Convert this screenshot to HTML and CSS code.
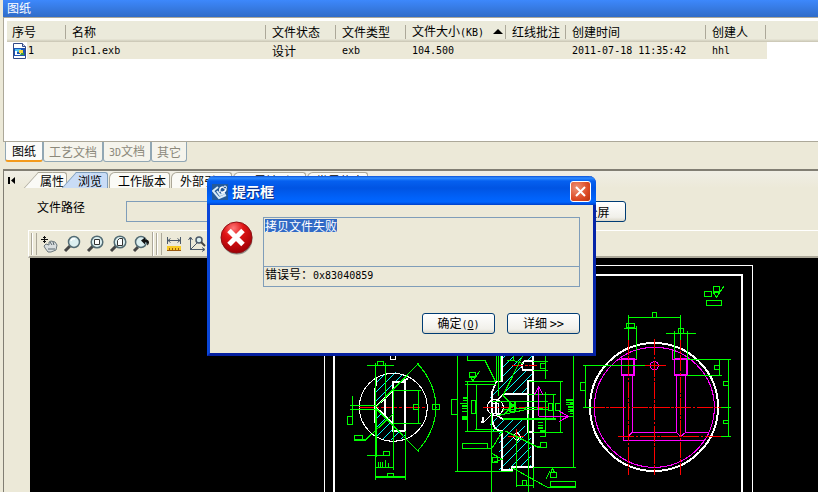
FILE: index.html
```html
<!DOCTYPE html>
<html lang="zh-CN">
<head>
<meta charset="utf-8">
<title>图纸</title>
<link rel="stylesheet" href="styles.css">
</head>
<body>
<main class="app">
  <section class="documents">
    <h1 class="pane-title">图纸</h1>
    <div class="list">
      <table class="files">
        <colgroup><col class="c60"><col class="c200"><col class="c70"><col class="c70"><col class="c100"><col class="c60"><col class="c140"><col class="c60"><col></colgroup>
        <thead>
          <tr><th>序号</th><th>名称</th><th>文件状态</th><th>文件类型</th><th>文件大小<span class="mono">(KB)</span><span class="sort"></span></th><th>红线批注</th><th>创建时间</th><th>创建人</th><th class="rest"></th></tr>
        </thead>
        <tbody>
          <tr>
            <td class="first"><div class="cell"><svg class="file-icon" width="15" height="16" viewBox="0 0 15 16"><path d="M1.500 .5h9l3 3v12h-12z" fill="#fff" stroke="#334a86"/><path d="M10.500 .5v3h3" fill="#cfd8ee" stroke="#334a86"/><path d="M2 5h11v8H2z" fill="#1b53b5"/><path d="M3 6h6v3H3z" fill="#4fc3f0"/><path d="M3 8h2v3h3V9h2v3H3z" fill="#fff"/><path d="M7 7h4v3H7z" fill="#f6d63a"/><path d="M9 10h3v2H8z" fill="#3f9a3c"/></svg><span class="mono">1</span></div></td>
            <td class="mono">pic1.exb</td><td>设计</td><td class="mono">exb</td><td class="mono">104.500</td><td></td><td class="mono">2011-07-18 11:35:42</td><td class="mono">hhl</td><td class="rest"></td>
          </tr>
        </tbody>
      </table>
    </div>
    <nav class="doc-tabs">
      <button class="doc-tab current">图纸</button><button class="doc-tab">工艺文档</button><button class="doc-tab"><span class="mono">3D</span>文档</button><button class="doc-tab">其它</button>
    </nav>
  </section>

  <section class="viewer">
    <nav class="view-tabs">
      <button class="first-tab" aria-label="首页"><svg width="8" height="9" viewBox="0 0 8 9"><path d="M0 1h2v7H0zM7 1v7L3 4.500z" fill="#000"/></svg></button>
      <button class="view-tab slant">属性</button><button class="view-tab slant active">浏览</button><button class="view-tab">工作版本</button><button class="view-tab">外部引用</button><button class="view-tab">哪里被引用</button><button class="view-tab">世界信息</button>
    </nav>
    <div class="path-row">
      <label for="path">文件路径</label>
      <input id="path" class="path" type="text">
      <button class="button full">全屏</button>
    </div>
    <div class="stage">
      <div class="toolbar">
        <span class="grip"></span>
        <button class="tool" aria-label="平移"><svg width="18" height="18" viewBox="0 0 18 18"><path d="M6 9l3 1V7l2-1 4 1 2 3-1 5-5 2H8l-3-4-1-2z" fill="#d9dedf" stroke="#6a777c"/><path d="M10 7l2 3m1-3l1 3M8 14h7" stroke="#59666c" fill="none"/><path d="M4.500 1v7M1 4.500h7M3 2.500h3M3 6.500h3" stroke="#111" fill="none"/></svg></button>
        <button class="tool" aria-label="缩放"><svg width="18" height="18" viewBox="0 0 18 18"><path d="M2 16l5-5" stroke="#454545" stroke-width="3"/><circle cx="11" cy="7" r="5.500" fill="#dceff0" stroke="#536b73" stroke-width="1.500"/><path d="M8 6q1-3 4-2" stroke="#fff" stroke-width="1.500" fill="none"/></svg></button>
        <button class="tool" aria-label="窗口缩放"><svg width="18" height="18" viewBox="0 0 18 18"><path d="M2 16l5-5" stroke="#454545" stroke-width="3"/><circle cx="11" cy="7" r="5.800" fill="#dceff0" stroke="#536b73" stroke-width="1.500"/><path d="M8.500 4.500h5v5h-5z" fill="#fff" stroke="#333"/></svg></button>
        <button class="tool" aria-label="整页显示"><svg width="18" height="18" viewBox="0 0 18 18"><path d="M2 16l5-5" stroke="#454545" stroke-width="3"/><circle cx="11" cy="7" r="5.800" fill="#dceff0" stroke="#536b73" stroke-width="1.500"/><path d="M10.500 3.500h3v7h-5v-5z" fill="#fff" stroke="#333"/></svg></button>
        <button class="tool" aria-label="上一视图"><svg width="18" height="18" viewBox="0 0 18 18"><path d="M2 16l4-4" stroke="#454545" stroke-width="3"/><circle cx="9" cy="7" r="5.500" fill="#dceff0" stroke="#536b73" stroke-width="1.500"/><path d="M9 5.500l4-3v2q4 0 4 3 0 2-2 3 1-4-2-3v2z" fill="#111"/></svg></button>
        <span class="divider"></span>
        <span class="grip"></span>
        <button class="tool" aria-label="测量长度"><svg width="18" height="18" viewBox="0 0 18 18"><path d="M2.500 2v7M15.500 2v7M3 5.500h12M5.500 3.500L3 5.500l2.500 2M12.500 3.500l2.500 2-2.500 2" stroke="#4b5969" fill="none"/><path d="M2 11h14v4H2z" fill="#f8ca26"/><path d="M2 15.500h14M4.500 13v2M7.500 13v2M10.500 13v2M13.500 13v2" stroke="#9a5a10"/></svg></button>
        <button class="tool" aria-label="测量角度"><svg width="18" height="18" viewBox="0 0 18 18"><path d="M2.500 15V3M.5 5l2-3 2 3M2 14.500h14M14 12.500l3 2-3 2M3 14l6-6" stroke="#4b5969" fill="none"/><circle cx="11" cy="5" r="3" fill="#dceff0" stroke="#4b5969" stroke-width="1.500"/><path d="M13 7l4 4" stroke="#444" stroke-width="2"/></svg></button>
      </div>
      <div class="canvas">
        <svg class="drawing" width="788" height="234" viewBox="30 258 788 234" fill="none" shape-rendering="crispEdges" aria-label="零件图">
          <defs>
            <pattern id="hatch" width="27" height="27" patternUnits="userSpaceOnUse"><path d="M-3 30L30-3M-3 3L3-3M24 30l6-6" stroke="#0ff" stroke-width="3.200"/></pattern>
          </defs>
          <path d="M324.500 492V265.500h428V492" stroke="#fff"/>
          <path d="M334 492V275h408V492" stroke="#fff" stroke-width="2"/>

          <g transform="translate(320 340) scale(.33333)" stroke-width="3.200">
            <path d="M168 112l32-12 30-3 34 18-19 10-25 2v22l-52 52zM168 206l52 46v20h35l9 20-40 10-30-2-26-12z" fill="url(#hatch)"/>
            <circle cx="220" cy="202" r="102" stroke="#fff"/>
            <path d="M116 202h205" stroke="#f00" stroke-dasharray="48 6 8 6"/>
            <path d="M212 48v10h15V48" stroke="#fff"/>
            <path d="M265 115l-20 11h-26v25l-52 50 52 50v22h37V126h-37M219 126v146M196 174v56M170 115l-5 38v95" stroke="#fff" stroke-width="5"/>
            <path d="M141 76h81M173 76V65h17v11M167 70v350M196 70v108M90 196h77M90 208h77M97 168v62M83 230h14v24H83zM104 287h24v13h-24zM128 300h8l86-80M220 151h82M220 250h82M295 151v99M281 194h14v14h-14zM220 151v239M257 272v147M167 382h53M167 411h90M141 346h70M190 346v-12h18v12M203 411v-11h18v11M168 205l130 132M168 201L298 68M292 70q55 60 56 132-1 70-56 132M338 194h20v14h-20z" stroke="#0f0"/>
            <path d="M168 210v142" stroke="#0f0" stroke-width="5"/>
            <path d="M175 382v-16M182 382v-16M188 382v-16M196 382v-22M205 382v-14" stroke="#0f0" stroke-width="4"/>
          </g>

          <g transform="translate(440 340) scale(.33333)" stroke-width="3.200">
            <path d="M187 48h93v14h-32l-5 15 5 14h32v33h-16v38h-74l-33 13-8 24 8 26 20 13h78v38h17v106h-62v9h-33V275h-23l-7-45 2-55 12-38 18-12z" fill="url(#hatch)"/>
            <path d="M187 48v77h-18l-12 30v85q2 32 30 33v118h30v-10h63V276h-15V237h-78l-20-14M265 163h-75l-22 21v38M265 163v74M280 48v76h-15v39M280 124v152M280 64h-28l-8 13 6 14h30M122 247h7v-15" stroke="#fff" stroke-width="5"/>
            <ellipse cx="166" cy="202" rx="24" ry="24" stroke="#fff"/>
            <path d="M158 190h17v31h-17zM129 248l30-28M218 290l12-14 12 14-12 12z" stroke="#fff"/>
            <path d="M130 202h196M215 76h75M204 289h48M229 266v43" stroke="#f00" stroke-dasharray="35 5 8 5"/>
            <path d="M53 48v346M82 48v13h53l32 64h-91M89 97h17v14H89zM92 111l6 12 21-29M93 124h11M82 127v147M75 274h112M76 133h92M109 133v135M104 268h64M94 181h12v40H94zM50 179H34v44h19M67 310h76v16H67zM143 326h12l33-52M154 220v236M46 394h172M169 48v76M175 48v120M181 48v76M190 165l57-116M188 165l32 33-28 24M200 61h20V48M220 61l28 10M156 184h168M190 210l90-8 44 8M172 227l90-19h62M188 237h160M264 163h84M341 163v74M267 124h102M362 124v153M280 277h89M316 48v69M280 64h44M280 91h44M301 71h15v14h-15zM325 190h14v21h-14zM347 190h14v21h-14zM401 48v334M280 382h128M380 230h20M196 273l96 48h10M301 307h18v15h-18zM155 340l32 18-30 10M157 352h15v15h-15zM229 290v152M265 222v234M280 382v61M229 436h51M247 436v-14h12v14M218 384l104 58h10M332 424h74v18h-74zM331 398h18v14h-18zM333 397l4-13 6 13M319 416l12-24M316 156v134M210 185h15v30h-15zM200 210l25-20" stroke="#0f0"/>
            <path d="M332 440h76" stroke="#0f0" stroke-width="5"/>
            <path d="M69 174h13M69 181h13M60 190h22M66 198h16M66 206h16M66 214h16M66 231h16M66 237h16M378 180h22M378 187h22M378 194h22M383 201h17M383 208h17M383 215h17M294 248h15M294 256h15M294 264h15M300 273h16M300 289h16" stroke="#0f0" stroke-width="4"/>
            <path d="M296 229V140l-13 25M296 140l13 25M296 229h90l-28-15M386 229l-28 15" stroke="#f0f"/>
          </g>

          <g transform="translate(570 260) scale(.33333)" stroke-width="3.200">
            <circle cx="252" cy="441" r="192" stroke="#fff" stroke-width="6"/>
            <circle cx="253" cy="442" r="180" stroke="#f0f"/>
            <path d="M160 346v195h245M187 346v171h132V346M347 346v171h70M175 529l12-12M319 517l13 13 15-13M308 268v30h14M142 298h58M187 346h-27" stroke="#f0f"/>
            <path d="M155 298h38v48h-38zM314 298h38v48h-38z" stroke="#f0f" stroke-width="5"/>
            <circle cx="253" cy="317" r="12" stroke="#f0f"/>
            <path d="M55 442h398M144 529h309M175 235v410M331 220v425M253 237v407" stroke="#f00" stroke-dasharray="49 4 8 4"/>
            <path d="M225 317h63" stroke="#f00"/>
            <path d="M175 165v75M331 165v75M175 172h156M247 172v-15h12v15M163 205h37M169 190h25v12h-25zM200 198v100M288 220h90M314 213v85M352 213v85M326 219v-14h14v14M40 317h185M46 317v125M38 442h30M46 367H31v24h15M352 298h130M352 346h104M449 298v48M447 317h-14v12h14M475 298v231M453 442h30M453 529h30M475 365h-14v12h14M475 481h-14v10h14M10 75v547M0 622h18M0 664h16v17H0M403 94h22v15h-22zM430 79h18v15h-18zM409 121h46v15h-46zM430 97l9 15 22-33M432 97h15M0 420h10M0 430h10M0 440h10M0 450h10M0 460h10M0 469h10" stroke="#0f0"/>
          </g>
        </svg>
      </div>
    </div>
  </section>
</main>

<div class="dialog" role="dialog" aria-labelledby="dialog-title">
  <header class="dialog-bar">
    <svg width="16" height="16" viewBox="0 0 16 16"><path d="M0 0h16v16H0z" fill="#245a9a"/><path d="M6 3L1 7l6 7 7-3M5 7l3 4 5-2" fill="none" stroke="#d9ebf8" stroke-width="2"/><path d="M8 8q-1-5 3-5M14 5q-1 4-5 3" fill="none" stroke="#fff" stroke-width="1.500"/><circle cx="13" cy="3.500" r="1.500" fill="none" stroke="#fff"/></svg>
    <h2 id="dialog-title">提示框</h2>
    <button class="close" aria-label="关闭"><svg width="19" height="19" viewBox="0 0 19 19"><path d="M5 5l9 9M14 5l-9 9" stroke="#fff" stroke-width="2"/></svg></button>
  </header>
  <div class="dialog-body">
    <svg class="error" width="34" height="34" viewBox="0 0 34 34"><defs><radialGradient id="red" cx=".4" cy=".2" r=".8"><stop offset="0" stop-color="#f77"/><stop offset=".4" stop-color="#e01515"/><stop offset="1" stop-color="#a00006"/></radialGradient></defs><circle cx="17" cy="18" r="15.500" fill="#555" opacity=".6"/><circle cx="16.500" cy="16.500" r="15.500" fill="url(#red)" stroke="#8e1013"/><path d="M9 9.500l14 14M23 9.500l-14 14" stroke="#fff" stroke-width="5"/></svg>
    <div class="details">
      <div class="message"><mark>拷贝文件失败</mark></div>
      <div class="code">错误号<span class="colon">：</span><span class="mono">0x83040859</span></div>
    </div>
  </div>
  <footer class="actions">
    <button class="button">确定<span class="mono">(<u>O</u>)</span></button>
    <button class="button">详细 <span class="arrows">&gt;&gt;</span></button>
  </footer>
</div>
</body>
</html>
```
FILE: styles.css
```css
* { box-sizing: border-box; }

body {
  margin: 0;
  background: #ece9d8;
  color: #000;
  font: 12px/16px "Noto Sans CJK SC", sans-serif;
  overflow: hidden;
}

button, input {
  margin: 0;
  padding: 0;
  border: 0;
  background: none;
  color: inherit;
  font: inherit;
  white-space: nowrap;
}

.mono { font-family: "DejaVu Sans Mono", monospace; font-size: 10px; }
.arrows { font-family: "DejaVu Sans Mono", monospace; font-size: 12px; }
.colon { font-family: "Noto Sans CJK TC", sans-serif; }

.app { display: flex; flex-direction: column; height: 100vh; padding-left: 3px; }

/* Document list */
.pane-title {
  margin: 0;
  height: 17px;
  padding-left: 4px;
  background: linear-gradient(#3d88fc, #306cc8);
  color: #fff;
  font-size: 12px;
  font-weight: normal;
  line-height: 15px;
}

.list {
  height: 125px;
  border: 1px solid #aca899;
  border-right: 0;
  background: #fff;
  padding: 3px 0 0 3px;
}

.files { width: 100%; table-layout: fixed; border-collapse: collapse; }
.c60 { width: 60px; }
.c70 { width: 70px; }
.c100 { width: 100px; }
.c140 { width: 140px; }
.c200 { width: 200px; }

.files th {
  height: 21px;
  padding: 0 0 0 5px;
  background:
    linear-gradient(#aca899, #aca899) right 1px center / 1px 14px no-repeat,
    linear-gradient(#ebeadb 85%, #c8c4b2);
  font-weight: normal;
  text-align: left;
  white-space: nowrap;
}
.files th.rest { background: linear-gradient(#ebeadb 85%, #c8c4b2); }
.files td { height: 17px; padding: 0 0 0 5px; background: #ece9d8; line-height: 16px; }
.files td.first { background: linear-gradient(90deg, #fff 20px, #ece9d8 20px); }
.files td.rest { background: #fff; }
.cell { display: flex; align-items: center; gap: 1px; }

.sort {
  display: inline-block;
  margin-left: 9px;
  border: 5px solid transparent;
  border-top: 0;
  border-bottom-color: #000;
  vertical-align: 2px;
}

.doc-tabs { display: flex; padding-left: 2px; }
.doc-tab {
  height: 20px;
  padding: 0 5px;
  border: 1px solid #91a7b4;
  border-top: 0;
  border-radius: 0 0 3px 3px;
  background: #f5f4ec;
  color: #8c897b;
  line-height: 18px;
}
.doc-tab.current { border-bottom: 2px solid #f39a1c; background: #fcfcfa; color: #000; padding: 0 6px; }

/* Viewer */
.viewer {
  display: flex;
  flex: 1;
  flex-direction: column;
  margin-top: 7px;
  border-top: 2px solid #817e73;
  border-left: 1px solid #817e73;
  min-height: 0;
}

.view-tabs { display: flex; align-items: flex-end; height: 17px; background: linear-gradient(#f0eee5, #ece9d8); }
.first-tab { width: 34px; height: 17px; padding-left: 4px; text-align: left; line-height: 12px; }
.view-tab {
  position: relative;
  height: 16px;
  margin-right: 1px;
  padding: 0 3px 0 8px;
  border: 1px solid #aca899;
  border-bottom: 0;
  border-radius: 6px 3px 0 0;
  background: #fafaf6;
  line-height: 13px;
}
.view-tab.slant { z-index: 1; margin-right: 0; padding: 0 2px; border-left: 0; border-radius: 0 3px 0 0; }
.view-tab.slant.active { z-index: 2; margin: 0 1px 0 9px; padding-right: 5px; }
.view-tab.slant::before {
  content: "";
  position: absolute;
  z-index: -1;
  top: -1px;
  bottom: 0;
  left: -7px;
  width: 14px;
  border: 1px solid #aca899;
  border-width: 1px 0 0 1px;
  background: inherit;
  transform: skewX(-42deg);
}
.view-tab.active { border-color: #7f9db9; background: #c9dcf6; }
.view-tab.active.slant::before { border-color: #7f9db9; }

.path-row { display: flex; align-items: flex-start; height: 42px; padding: 13px 192px 0 33px; }
.path-row label { width: 89px; line-height: 12px; }
.path { width: 420px; height: 21px; border: 1px solid #7f9db9; }

.button {
  width: 73px;
  height: 21px;
  border: 1px solid #003c74;
  border-radius: 3px;
  background: linear-gradient(#fff, #f1f0ea 80%, #dcd8ca);
  line-height: 18px;
}
.button.full { width: 57px; margin-left: auto; }

.stage { display: flex; flex: 1; flex-direction: column; min-height: 0; padding-left: 24px; }
.toolbar {
  display: flex;
  align-items: center;
  height: 28px;
  border-top: 1px solid #fff;
  border-left: 1px solid #fff;
  border-bottom: 2px solid #aca899;
}
.grip { width: 6px; height: 22px; margin: 0 0 0 2px; border: 1px solid #aca899; border-width: 0 1px; background: linear-gradient(90deg, #fff 1px, #ece9d8 1px); }
.tool { display: grid; place-items: center; width: 23px; height: 22px; }
.divider { width: 2px; height: 24px; border-left: 1px solid #aca899; background: #fff; }
.canvas { flex: 1; min-height: 0; overflow: hidden; margin-left: 2px; background: #000; }
.drawing { display: block; }

/* Message dialog */
.dialog {
  position: absolute;
  z-index: 10;
  top: 176px;
  left: 207px;
  width: 389px;
  border: 3px solid #0a46d8;
  border-top: 0;
  border-color: #0a46d8 #0524a8 #051fa0 #0a46d8;
  border-radius: 7px 7px 0 0;
  background: #ece9d8;
}
.dialog-bar {
  display: flex;
  align-items: center;
  height: 29px;
  margin: 0 -3px;
  padding: 2px 5px 0;
  border-radius: 7px 7px 0 0;
  background: linear-gradient(#0a50d6, #2f8cff 2px, #0560f0 5px, #0054e3 12px, #0062fa 22px, #0066ff 26px, #0040c8);
  color: #fff;
}
.dialog-bar h2 { margin: 0 auto 0 4px; font-size: 14px; line-height: 16px; padding-bottom: 2px; text-shadow: 1px 1px #0a2a80; }
.close {
  width: 21px;
  height: 21px;
  border: 1px solid #fff;
  border-radius: 3px;
  background: radial-gradient(circle at 30% 30%, #ee9377, #dc4a25 60%, #b8320e);
}
.close svg { display: block; }
.dialog-body { display: flex; gap: 9px; padding: 12px 13px 0 10px; }
.error { flex: none; margin-top: 4px; }
.details { flex: 1; border: 1px solid #7f9db9; }
.message { height: 49px; padding: 1px; border-bottom: 1px solid #7f9db9; line-height: 13px; }
.message mark { display: inline-block; background: #316ac5; color: #fff; line-height: 13px; }
.code { height: 19px; padding-left: 1px; line-height: 13px; }
.actions { display: flex; justify-content: flex-end; gap: 12px; padding: 26px 13px 19px; }
```
